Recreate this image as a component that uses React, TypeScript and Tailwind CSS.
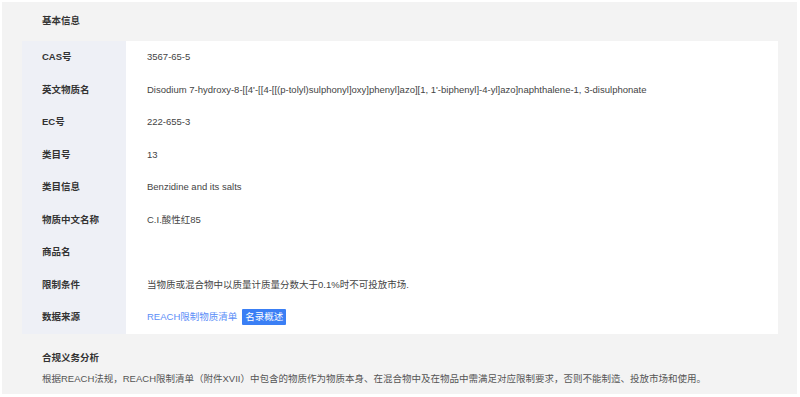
const rows: { label: string; value?: string; source?: boolean }[] = [
  { label: "CAS号", value: "3567-65-5" },
  {
    label: "英文物质名",
    value:
      "Disodium 7-hydroxy-8-[[4'-[[4-[[(p-tolyl)sulphonyl]oxy]phenyl]azo][1, 1'-biphenyl]-4-yl]azo]naphthalene-1, 3-disulphonate",
  },
  { label: "EC号", value: "222-655-3" },
  { label: "类目号", value: "13" },
  { label: "类目信息", value: "Benzidine and its salts" },
  { label: "物质中文名称", value: "C.I.酸性红85" },
  { label: "商品名", value: "" },
  { label: "限制条件", value: "当物质或混合物中以质量计质量分数大于0.1%时不可投放市场." },
  { label: "数据来源", source: true },
];

export default function App() {
  return (
    <div
      className="w-[800px] h-[397px] bg-white pt-[2px] pl-[2px] pr-[3px] pb-[3px]"
      style={{ fontFamily: '"Liberation Sans", "Noto Sans CJK SC", sans-serif' }}
    >
      <div className="h-full bg-[#f3f3f3] pl-5 pr-[19px]">
        <div className="h-[39px] flex items-center pl-5 text-[9.5px] font-bold text-[#333]">基本信息</div>
        <div className="bg-white flex flex-col">
          {rows.map((r) => (
            <div key={r.label} className="flex h-[32.5px]">
              <div className="w-[104px] shrink-0 bg-[#eef0f6] flex items-center pl-5 text-[9.5px] font-bold text-[#333]">
                {r.label}
              </div>
              <div className="flex-1 flex items-center pl-[21px] text-[9.5px] text-[#444]">
                {r.source ? (
                  <div className="flex items-center gap-[5px]">
                    <span className="text-[#5b8ef7]">REACH限制物质清单</span>
                    <span className="bg-[#3a7ff5] text-white px-[3px] h-[16px] leading-[16px] rounded-[1px]">名录概述</span>
                  </div>
                ) : (
                  r.value
                )}
              </div>
            </div>
          ))}
        </div>
        <div className="pl-5 pt-[16px]">
          <div className="text-[9.5px] font-bold text-[#333] h-[16px] leading-[16px]">合规义务分析</div>
          <div className="text-[9.5px] text-[#555] mt-[5px] h-[16px] leading-[16px]">
            根据REACH法规，REACH限制清单（附件XVII）中包含的物质作为物质本身、在混合物中及在物品中需满足对应限制要求，否则不能制造、投放市场和使用。
          </div>
        </div>
      </div>
    </div>
  );
}
